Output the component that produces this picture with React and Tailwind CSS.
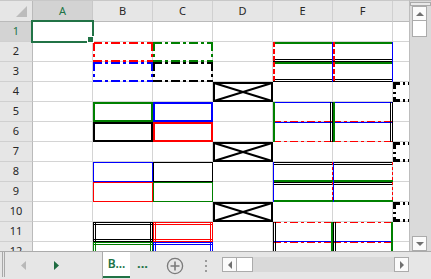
import React from 'react';

const RED = '#ff0000';
const GREEN = '#008000';
const BLUE = '#0000ff';
const BLACK = '#000000';

const CW = 60;
const RH = 20;

const WIDTH = { thin: 1, medium: 2, dashed: 1, mediumDashed: 2, dashDot: 1, mediumDashDot: 2, slantDashDot: 3, double: 3 };
const DASH = { dashed: '3 2', mediumDashed: '5 2', dashDot: '8 3 3 3', mediumDashDot: '9 3 3 3', slantDashDot: '7 3 2 3' };

const all = (style, color) => ({ t: [style, color], b: [style, color], l: [style, color], r: [style, color] });
const group = (ids, spec) => Object.fromEntries(ids.map((id) => [id, spec]));

// cell border samples, keyed by address
const BORDERS = {
  B2: all('mediumDashDot', RED),
  C2: all('mediumDashDot', GREEN),
  B3: all('mediumDashDot', BLUE),
  C3: all('mediumDashDot', BLACK),
  ...group(['E2', 'F2', 'E3', 'F3'], { t: ['medium', GREEN], b: ['double', BLACK], l: ['mediumDashed', RED], r: ['thin', BLUE] }),
  ...group(['D4', 'D7', 'D10'], { ...all('medium', BLACK), x: true }),
  ...group(['G4', 'G7', 'G10'], all('slantDashDot', BLACK)),
  B5: all('medium', GREEN),
  C5: all('medium', BLUE),
  B6: all('medium', BLACK),
  C6: all('medium', RED),
  ...group(['E5', 'F5', 'E6', 'F6'], { t: ['thin', BLUE], b: ['dashDot', RED], l: ['medium', GREEN], r: ['double', BLACK] }),
  B8: all('thin', BLUE),
  C8: all('thin', BLACK),
  B9: all('thin', RED),
  C9: all('thin', GREEN),
  ...group(['E8', 'F8', 'E9', 'F9'], { t: ['double', BLACK], b: ['medium', GREEN], l: ['thin', BLUE], r: ['dashed', RED] }),
  B11: all('double', BLACK),
  C11: all('double', RED),
  B12: all('double', GREEN),
  C12: all('double', BLUE),
  ...group(['E11', 'F11', 'E12', 'F12'], { t: ['dashDot', RED], b: ['thin', BLUE], l: ['double', BLACK], r: ['medium', GREEN] }),
};

const COLS = ['A', 'B', 'C', 'D', 'E', 'F', 'G'];
const ROWS = [1, 2, 3, 4, 5, 6, 7, 8, 9, 10, 11, 12];

function edge(side, [style, color]) {
  const sw = WIDTH[style];
  const offsets = style === 'double' ? [0.5, 2.5] : [sw / 2];
  const lw = style === 'double' ? 1 : sw;
  return offsets.map((o, i) => {
    let p;
    if (side === 't') p = { x1: 0, y1: o, x2: CW, y2: o };
    if (side === 'b') p = { x1: 0, y1: RH - o, x2: CW, y2: RH - o };
    if (side === 'l') p = { x1: o, y1: 0, x2: o, y2: RH };
    if (side === 'r') p = { x1: CW - o, y1: 0, x2: CW - o, y2: RH };
    return <line key={side + i} {...p} stroke={color} strokeWidth={lw} strokeDasharray={DASH[style]} />;
  });
}

function Cell({ id, selected }) {
  const spec = BORDERS[id];
  return (
    <div className="relative w-[60px] h-[20px] shrink-0 border-r border-b border-[#d4d4d4] bg-white">
      {spec && (
        <svg className="absolute left-0 top-0 z-10" width={CW} height={RH} shapeRendering="crispEdges">
          {spec.x && (
            <g shapeRendering="auto" stroke={BLACK} strokeWidth="2">
              <line x1="1" y1="1" x2={CW - 1} y2={RH - 1} />
              <line x1="1" y1={RH - 1} x2={CW - 1} y2="1" />
            </g>
          )}
          {['t', 'b', 'l', 'r'].map((s) => spec[s] && edge(s, spec[s]))}
        </svg>
      )}
      {selected && (
        <div className="absolute -inset-[2px] z-20 border-2 border-[#217346]">
          <div className="absolute -right-[2px] -bottom-[2px] w-[7px] h-[7px] bg-[#217346] border border-white" />
        </div>
      )}
    </div>
  );
}

function Grid() {
  return (
    <div className="w-[409px] h-[251px] overflow-hidden flex flex-col bg-white">
      <div className="flex shrink-0 h-[22px] border-t border-[#c8c8c8] bg-[#e6e6e6]">
        <div className="w-[33px] shrink-0 border-r border-b border-[#bababa] flex items-end justify-end pr-[4px] pb-[3px]">
          <svg width="12" height="12">
            <polygon points="0,11 11,0 11,11" fill="#bcbcbc" />
          </svg>
        </div>
        {COLS.map((c) => (
          <div
            key={c}
            className={`w-[60px] shrink-0 border-r border-b flex items-center justify-center ${
              c === 'A' ? 'bg-[#d3d3d3] text-[#217346] border-r-[#c8c8c8] border-b-[#bababa]' : 'text-[#262626] border-r-[#d0d0d0] border-b-[#bababa]'
            }`}
          >
            {c === 'G' ? '' : c}
          </div>
        ))}
      </div>
      {ROWS.map((r) => (
        <div key={r} className="flex shrink-0">
          <div
            className={`w-[33px] h-[20px] shrink-0 border-r border-b border-r-[#bababa] border-b-[#d0d0d0] flex items-center justify-center ${
              r === 1 ? 'bg-[#d3d3d3] text-[#217346]' : 'bg-[#e6e6e6] text-[#262626]'
            }`}
          >
            {r}
          </div>
          {COLS.map((c) => (
            <Cell key={c} id={`${c}${r}`} selected={c === 'A' && r === 1} />
          ))}
        </div>
      ))}
    </div>
  );
}

function ArrowBtn({ dir, className = '' }) {
  const pts = {
    up: '1,6 5,2 9,6',
    down: '1,2 5,6 9,2',
    left: '6,1 2,5 6,9',
    right: '2,1 6,5 2,9',
  }[dir];
  const vertical = dir === 'up' || dir === 'down';
  return (
    <div className={`w-[15px] h-[15px] shrink-0 bg-[#fbfbfb] border border-[#ababab] flex items-center justify-center ${className}`}>
      <svg width={vertical ? 10 : 8} height={vertical ? 8 : 10}>
        <polygon points={pts} fill="#707070" />
      </svg>
    </div>
  );
}

function VScroll() {
  return (
    <div className="w-[22px] h-[251px] shrink-0 border-l border-t border-[#bdbdbd] bg-[#dadada] flex flex-col">
      <div className="mt-[1px] h-[4px] border border-[#ababab] bg-[#e9e9e9]" />
      <ArrowBtn dir="up" className="ml-[2px]" />
      <div className="ml-[2px] w-[15px] h-[16px] bg-white border border-t-0 border-[#ababab]" />
      <div className="flex-1" />
      <ArrowBtn dir="down" className="ml-[2px]" />
    </div>
  );
}

function TabBar() {
  return (
    <div className="h-[28px] flex border-t border-[#ababab] bg-[#e6e6e6] font-['Noto_Sans',sans-serif]">
      <div className="ml-[2px] w-[3px] h-[25px] shrink-0 border-x border-[#a8a8a8]" />
      <div className="w-[98px] shrink-0 border-r border-[#ababab] flex items-center">
        <svg className="ml-[16px]" width="6" height="9">
          <polygon points="5,0 0,4.5 5,9" fill="#b8b8b8" />
        </svg>
        <svg className="ml-[27px]" width="6" height="9">
          <polygon points="0,0 5,4.5 0,9" fill="#1e6b41" />
        </svg>
      </div>
      <div className="w-[27px] h-[26px] shrink-0 bg-white border-b-2 border-[#217346] flex items-center justify-center text-[12px] font-semibold text-[#217346]">
        B...
      </div>
      <div className="w-[30px] shrink-0 flex items-center pl-[7px] text-[13px] font-bold text-[#217346] pb-[3px]">...</div>
      <div className="w-[30px] shrink-0 flex items-center justify-center">
        <svg width="18" height="18" viewBox="0 0 18 18">
          <circle cx="9" cy="9" r="7.6" fill="none" stroke="#7a7a7a" strokeWidth="1.3" />
          <path d="M9 4.5v9M4.5 9h9" stroke="#7a7a7a" strokeWidth="1.6" />
        </svg>
      </div>
      <div className="w-[32px] shrink-0 flex flex-col items-center justify-center gap-[3px] pr-[1px]">
        <div className="w-[2px] h-[2px] bg-[#9a9a9a]" />
        <div className="w-[2px] h-[2px] bg-[#9a9a9a]" />
        <div className="w-[2px] h-[2px] bg-[#9a9a9a]" />
      </div>
      <div className="w-[187px] h-[15px] mt-[5px] shrink-0 flex bg-[#d9d9d9]">
        <ArrowBtn dir="left" />
        <div className="w-[16px] h-[15px] bg-white border border-l-0 border-[#ababab]" />
        <div className="flex-1" />
        <ArrowBtn dir="right" />
      </div>
      <div className="flex-1" />
    </div>
  );
}

export default function App() {
  return (
    <div className="w-[431px] h-[279px] overflow-hidden flex flex-col bg-white text-[11px] font-['Noto_Sans',sans-serif]">
      <div className="flex h-[251px] shrink-0">
        <Grid />
        <VScroll />
      </div>
      <TabBar />
    </div>
  );
}
